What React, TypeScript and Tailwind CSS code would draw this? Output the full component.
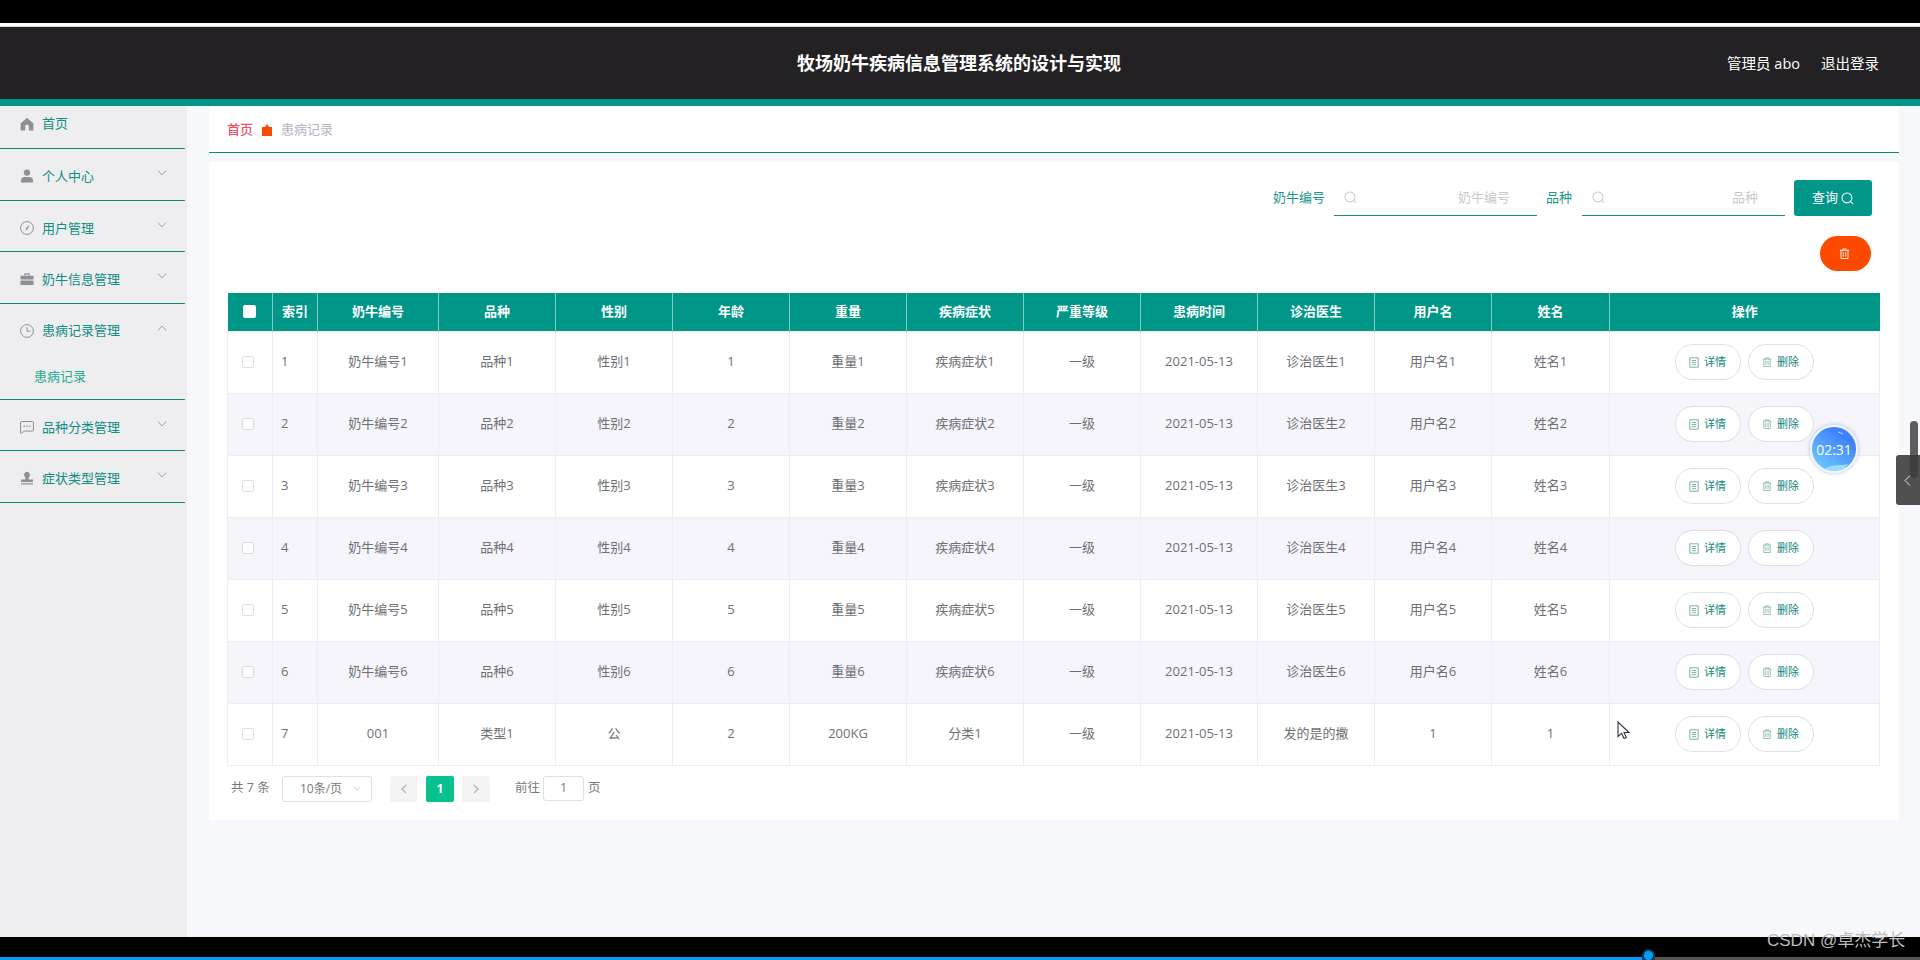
import React from "react";

const headers = ["索引", "奶牛编号", "品种", "性别", "年龄", "重量", "疾病症状", "严重等级", "患病时间", "诊治医生", "用户名", "姓名"];
const widths = [45, 45, 121, 117, 117, 117, 117, 117, 117, 117, 117, 117, 118, 270];

const rows: string[][] = [1, 2, 3, 4, 5, 6].map((n) => [
  `${n}`, `奶牛编号${n}`, `品种${n}`, `性别${n}`, `${n}`, `重量${n}`, `疾病症状${n}`, "一级", "2021-05-13", `诊治医生${n}`, `用户名${n}`, `姓名${n}`,
]);
rows.push(["7", "001", "类型1", "公", "2", "200KG", "分类1", "一级", "2021-05-13", "发的是的撒", "1", "1"]);

const IconHome = () => (
  <svg width="14" height="14" viewBox="0 0 14 14" fill="#8f8f96"><path d="M7 .8 .6 6.6v7h4.6V9.2a1.8 1.8 0 0 1 3.6 0v4.4h4.6v-7z" /></svg>
);
const IconUser = () => (
  <svg width="14" height="14" viewBox="0 0 14 14" fill="#8f8f96"><circle cx="7" cy="3.6" r="3.2" /><path d="M.8 12c0-2.6 2-4 3.6-4h5.2c1.6 0 3.6 1.4 3.6 4 0 1-.6 1.6-1.6 1.6H2.4c-1 0-1.6-.6-1.6-1.6z" /></svg>
);
const IconCompass = () => (
  <svg width="14" height="14" viewBox="0 0 14 14" fill="none" stroke="#8f8f96" strokeWidth="1"><circle cx="7" cy="7" r="6.4" /><path d="M9.6 3.6 7.8 8 5.6 9.8 6.4 6.8z" fill="#8f8f96" stroke="none" /></svg>
);
const IconCase = () => (
  <svg width="14" height="14" viewBox="0 0 14 14" fill="#8f8f96"><path d="M4.4 1.2h5.2v2.2H8.4v-1H5.6v1H4.4zM.5 3.8h13v3.6H.5zM.5 8.4h13v4.6H.5z" /></svg>
);
const IconClock = () => (
  <svg width="14" height="14" viewBox="0 0 14 14" fill="none" stroke="#8f8f96" strokeWidth="1"><circle cx="7" cy="7" r="6.4" /><path d="M7 3v4.2h3.4" /></svg>
);
const IconChat = () => (
  <svg width="14" height="14" viewBox="0 0 14 14" fill="none" stroke="#8f8f96" strokeWidth="1"><path d="M1.6 1.5h10.8a1 1 0 0 1 1 1v7.6a1 1 0 0 1-1 1H4.4L1.4 13.2a.4.4 0 0 1-.8-.3V2.5a1 1 0 0 1 1-1z" /><circle cx="4.2" cy="6.2" r=".8" fill="#8f8f96" stroke="none" /><circle cx="7" cy="6.2" r=".8" fill="#8f8f96" stroke="none" /><circle cx="9.8" cy="6.2" r=".8" fill="#8f8f96" stroke="none" /></svg>
);
const IconStamp = () => (
  <svg width="14" height="14" viewBox="0 0 14 14" fill="#8f8f96"><path d="M7 .8a3 3 0 0 1 2 5.2c-.5.5-.6 1.3-.3 1.9l.3.6h4v2.4H1V8.500h4l.3-.6c.3-.6.2-1.400-.3-1.900A3 3 0 0 1 7 .8zM1 12.200h12v1.200H1z" /></svg>
);
const Chevron = ({ up = false }: { up?: boolean }) => (
  <svg width="10" height="6" viewBox="0 0 10 6" fill="none" stroke="#7fb5ae" strokeWidth="1" className="block">
    <path d={up ? "M1 5.500 5 1l4 4.500" : "M1 .5 5 5l4-4.500"} />
  </svg>
);
const Search = ({ color, size = 13 }: { color: string; size?: number }) => (
  <svg width={size} height={size} viewBox="0 0 14 14" fill="none" stroke={color} strokeWidth="1.100"><circle cx="6.400" cy="6.400" r="5.300" /><path d="m10.200 10.200 2.800 2.800" /></svg>
);
const Trash = ({ color, size = 11 }: { color: string; size?: number }) => (
  <svg width={size} height={size} viewBox="0 0 12 12" fill="none" stroke={color} strokeWidth="1"><path d="M1 2.500h10M4.200 2.500V1h3.600v1.500M2.200 2.500v9h7.600v-9M4.700 4.500v5M7.300 4.500v5" /></svg>
);
const Doc = () => (
  <svg width="10" height="11" viewBox="0 0 10 11" fill="none" stroke="#7fb0aa" strokeWidth="1"><path d="M.8.800h8.400v9.400H.8zM2.800 3.500h4.400M2.800 5.500h4.400M2.800 7.700h4.400" /></svg>
);

const menu = [
  { label: "个人中心", Icon: IconUser, h: "h-[52px]" },
  { label: "用户管理", Icon: IconCompass, h: "h-[51px]" },
  { label: "奶牛信息管理", Icon: IconCase, h: "h-[52px]" },
];
const menu2 = [
  { label: "品种分类管理", Icon: IconChat, h: "h-[51px]" },
  { label: "症状类型管理", Icon: IconStamp, h: "h-[52px]" },
];

const MenuRow = ({ label, Icon, h }: { label: string; Icon: () => React.ReactElement; h: string }) => (
  <div className={`${h} w-[185px] border-b border-[#0e8a7d] pl-[20px] pt-[17px]`}>
    <div className="relative flex h-[20px] items-center gap-[8px] text-[13px] leading-[20px] text-[#0f8f82]">
      <Icon />
      <span>{label}</span>
      <div className="absolute left-[137px] top-[4px]"><Chevron /></div>
    </div>
  </div>
);

function SearchField({ placeholder }: { placeholder: string }) {
  return (
    <div className="flex h-[36px] w-[203px] items-center justify-between border-b-[1.500px] border-[#0e8f81] pl-[10px] pr-[27px]">
      <Search color="#c9ccd3" />
      <span className="text-[13px] text-[#c9cad0]">{placeholder}</span>
    </div>
  );
}

export default function App() {
  return (
    <div className="relative flex h-[960px] w-[1920px] flex-col overflow-hidden bg-black font-['Open_Sans','Noto_Sans_CJK_SC',sans-serif]">
      <div className="h-[23px] bg-black" />
      <div className="h-[4px] border-b border-[#d8d8d8] bg-white" />
      <header className="relative flex h-[72px] items-center justify-center bg-[#232124] pr-[2px]">
        <h1 className="text-[18px] font-bold text-white">牧场奶牛疾病信息管理系统的设计与实现</h1>
        <div className="absolute right-[41px] top-0 flex h-[74px] items-center gap-[21px] pb-[1px] text-[14.500px] text-white">
          <span>管理员 abo</span>
          <span>退出登录</span>
        </div>
      </header>
      <div className="h-[7px] bg-[#009688]" />

      <div className="flex h-[831px]">
        <aside className="w-[187px] shrink-0 bg-[#eeedf0]">
          <div className="h-[43px] w-[185px] border-b border-[#0e8a7d] pl-[20px] pt-[8px]">
            <div className="flex h-[20px] items-center gap-[8px] text-[13px] text-[#0f8f82]">
              <IconHome />
              <span>首页</span>
            </div>
          </div>
          {menu.map((m) => <MenuRow key={m.label} {...m} />)}
          <div className="h-[96px] w-[185px] border-b border-[#0e8a7d] pl-[20px] pt-[17px]">
            <div className="relative flex h-[20px] items-center gap-[8px] text-[13px] text-[#0f8f82]">
              <IconClock />
              <span>患病记录管理</span>
              <div className="absolute left-[137px] top-[4px]"><Chevron up /></div>
            </div>
            <div className="ml-[14px] mt-[25px] text-[13px] leading-[20px] text-[#1cae8f]">患病记录</div>
          </div>
          {menu2.map((m) => <MenuRow key={m.label} {...m} />)}
        </aside>

        <main className="flex-1 bg-[#f7f8fc] pl-[22px] pr-[22px]">
          <div className="flex h-[47px] items-center gap-[9px] border-b border-[#0e8a7d] bg-white pl-[18px] pt-[1px] text-[13px]">
            <span className="font-medium text-[#e8536b]">首页</span>
            <svg width="10" height="12" viewBox="0 0 10 12" fill="#fb4a00"><path d="M5 0 7 3h3v9H0V3h3z" /></svg>
            <span className="text-[#b2b4c2]">患病记录</span>
          </div>

          <section className="mt-[9px] h-[658px] bg-white pl-[18px] pr-[19px] pt-[18px]">
            <div className="flex h-[36px] items-center justify-end pr-[8px] text-[13px]">
              <span className="mr-[9px] text-[#1a9488]">奶牛编号</span>
              <SearchField placeholder="奶牛编号" />
              <span className="ml-[9px] mr-[10px] text-[#1a9488]">品种</span>
              <SearchField placeholder="品种" />
              <button className="ml-[9px] flex h-[36px] w-[78px] items-center justify-center gap-[3px] rounded-[3px] bg-[#009688] text-white">
                查询 <Search color="#ffffff" />
              </button>
            </div>
            <div className="mt-[20px] flex justify-end pr-[9px]">
              <button className="flex h-[35px] w-[51px] items-center justify-center rounded-full bg-[#fe4a00] pr-[3px]">
                <Trash color="#ffffff" />
              </button>
            </div>

            <table className="mt-[22px] w-[1652px] table-fixed border-collapse text-[13px] text-[#6f7076]">
              <colgroup>
                {widths.map((w, i) => <col key={i} style={{ width: w }} />)}
              </colgroup>
              <thead>
                <tr className="h-[38px] bg-[#009688] font-bold text-white">
                  <th className="border-r border-[#7fcbc2]">
                    <span className="ml-[15px] block h-[13px] w-[13px] rounded-[2px] bg-white" />
                  </th>
                  {headers.map((h) => <th key={h} className="border-r border-[#7fcbc2] font-bold">{h}</th>)}
                  <th className="font-bold">操作</th>
                </tr>
              </thead>
              <tbody>
                {rows.map((r, i) => (
                  <tr key={i} className={`h-[62px] ${i % 2 ? "bg-[#f5f5fb]" : "bg-white"}`}>
                    <td className="border border-[#eceef5]">
                      <span className="ml-[14px] block h-[12px] w-[12px] rounded-[2px] border border-[#dcdfe6] bg-white" />
                    </td>
                    {r.map((c, j) => (
                      <td key={j} className={`border border-[#eceef5] ${j === 0 ? "pl-[8px] text-left" : "text-center"}`}>{c}</td>
                    ))}
                    <td className="border border-[#eceef5]">
                      <div className="flex items-center justify-center gap-[7px] pr-[1px] text-[11px] text-[#14897d]">
                        <button className="flex h-[36px] w-[66px] items-center justify-center gap-[5px] rounded-full border border-[#dcdfe6] bg-white"><Doc />详情</button>
                        <button className="flex h-[36px] w-[66px] items-center justify-center gap-[5px] rounded-full border border-[#dcdfe6] bg-white"><Trash color="#7fb0aa" size={10} />删除</button>
                      </div>
                    </td>
                  </tr>
                ))}
              </tbody>
            </table>

            <div className="mt-[10px] flex h-[26px] items-center pl-[4px] text-[12.500px] text-[#77787e]">
              <span className="w-[51px]">共 7 条</span>
              <div className="flex h-[26px] w-[90px] items-center justify-between rounded-[3px] border border-[#dcdfe6] pl-[17px] pr-[10px] text-[12px]">
                <span>10条/页</span>
                <svg width="8" height="5" viewBox="0 0 10 6" fill="none" stroke="#c0c4cc"><path d="M1 .5 5 5l4-4.500" /></svg>
              </div>
              <div className="ml-[18px] flex h-[26px] w-[27px] items-center justify-center rounded-[2px] bg-[#f4f4f5]">
                <svg width="6" height="10" viewBox="0 0 6 10" fill="none" stroke="#b4b5ba" strokeWidth="1.300"><path d="M5 1 1 5l4 4" /></svg>
              </div>
              <div className="ml-[9px] flex h-[26px] w-[28px] items-center justify-center rounded-[2px] bg-[#07c28f] text-[12px] font-bold text-white">1</div>
              <div className="ml-[8px] flex h-[26px] w-[28px] items-center justify-center rounded-[2px] bg-[#f4f4f5]">
                <svg width="6" height="10" viewBox="0 0 6 10" fill="none" stroke="#b4b5ba" strokeWidth="1.300"><path d="m1 1 4 4-4 4" /></svg>
              </div>
              <span className="ml-[25px]">前往</span>
              <div className="ml-[3px] flex h-[25px] w-[41px] items-center justify-center rounded-[3px] border border-[#dcdfe6]">1</div>
              <span className="ml-[4px]">页</span>
            </div>
          </section>
        </main>
      </div>

      <div className="h-[20px] bg-black" />
      <div className="flex h-[3px]">
        <div className="w-[1648px] bg-[#0a9bf5]" />
        <div className="flex-1 bg-[#555555]" />
      </div>

      {/* overlays */}
      <div className="absolute left-[1642px] top-[949px] flex h-[11px] w-[13px] items-start justify-center rounded-t-full bg-[#0a3e63]">
        <div className="mt-[2px] h-[9px] w-[9px] rounded-full bg-[#0a9bf5]" />
      </div>
      <div className="absolute left-[1767px] top-[929px] font-['Liberation_Sans','Noto_Sans_CJK_SC',sans-serif] text-[17px] leading-[24px] text-[#bdbdbd]">CSDN @卓杰学长</div>

      <div className="absolute left-[1810px] top-[425px] flex h-[48px] w-[48px] items-center justify-center overflow-hidden rounded-full border-[2px] border-[#f3f7ff] bg-[linear-gradient(35deg,#6fc8ff_10%,#3f82fd_75%)] text-[14px] text-white shadow-[0_0_4px_rgba(100,130,200,0.5)]">
        <svg width="44" height="44" viewBox="0 0 44 44" fill="none" className="absolute left-0 top-0">
          <path d="M26 5c2 .5 3.500 1.200 5 2" stroke="#cfe3ff" strokeWidth="0.800" />
          <path d="M14 41c8-4 16-2 22-4l-6 7H14z" fill="#9edcff" />
        </svg>
        <span className="relative">02:31</span>
      </div>

      <div className="absolute left-[1910px] top-[421px] h-[57px] w-[8px] rounded-full bg-[#5d5d60]" />
      <div className="absolute left-[1896px] top-[455px] flex h-[50px] w-[24px] items-center justify-center rounded-l-[3px] bg-[#3c3c3c]/90 pr-[2px]">
        <svg width="7" height="11" viewBox="0 0 7 11" fill="none" stroke="#e8e8e8" strokeWidth="1"><path d="M6 .5 1 5.500l5 5" /></svg>
      </div>

      <svg width="14" height="20" viewBox="0 0 14 20" className="absolute left-[1617px] top-[721px]" fill="#ffffff" stroke="#33333d" strokeWidth="1.100">
        <path d="M1 1v14.500l3.600-3.200 2.400 5.200 2.400-1-2.400-5h5z" />
      </svg>
    </div>
  );
}
